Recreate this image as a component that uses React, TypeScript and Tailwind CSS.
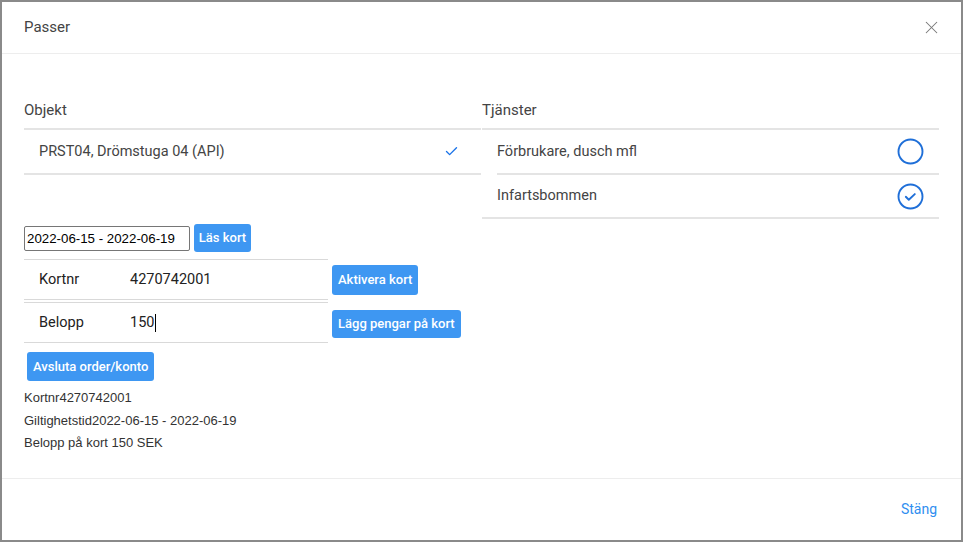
import { Check, X } from 'lucide-react';

const ui = "font-['Roboto','Noto_Sans',sans-serif]";
const arial = "font-['Liberation_Sans','Arial',sans-serif]";

function RingIcon({ checked }: { checked?: boolean }) {
  return (
    <svg width="27" height="27" viewBox="0 0 27 27" fill="none" aria-hidden>
      <circle cx="13.5" cy="13.5" r="12" stroke="#1f6fd8" strokeWidth="1.9" />
      {checked && (
        <path d="M8.8 13.8l3 2.9 6-5.6" stroke="#1f6fd8" strokeWidth="1.9" strokeLinecap="round" strokeLinejoin="round" />
      )}
    </svg>
  );
}

export default function App() {
  return (
    <div className={`${ui} h-[542px] w-[963px] overflow-hidden bg-white`}>
      <div className="flex h-full flex-col border-2 border-[#8a8a8a] bg-white">
        {/* header */}
        <div className="flex h-[52px] shrink-0 items-center justify-between border-b border-[#ededed] pl-[22px] pr-[19px]">
          <h1 className="text-[15px] text-[#444]">Passer</h1>
          <X className="h-[21px] w-[21px] text-[#777]" strokeWidth={1.2} />
        </div>

        {/* body */}
        <div className="flex-1 px-[22px] pt-[46px]">
          <div className="grid grid-cols-2 items-start gap-[1px]">
            <div>
              <h2 className="border-b-2 border-[#e4e4e4] pb-[8px] text-[15px] leading-[20px] text-[#444]">Objekt</h2>
              <div className="flex h-[45px] items-center justify-between border-b-2 border-[#e4e4e4] pl-[15px] pr-[22px] text-[14.5px] text-[#444]">
                <span>PRST04, Drömstuga 04 (API)</span>
                <Check className="h-[15px] w-[15px] text-[#1a73e8]" strokeWidth={2.2} />
              </div>

              <div className="mt-[49px] flex items-center gap-[4px]">
                <input
                  readOnly
                  value="2022-06-15 - 2022-06-19"
                  className={`${arial} h-[25px] w-[166px] rounded-[2px] border border-[#767676] px-[2px] text-[13.3px] text-black outline-none`}
                />
                <button className="h-[28px] w-[57px] rounded-[3px] bg-[#3e97f2] text-[13px] font-medium text-white">Läs kort</button>
              </div>

              <div className="mt-[7px] flex flex-col gap-[2px]">
                <div className="flex items-center gap-[4px]">
                  <div className="flex h-[41px] w-[304px] items-center border-y border-[#d9d9d9] px-[15px] text-[14.5px] text-[#222]">
                    <span className="w-[91px]">Kortnr</span>
                    <span>4270742001</span>
                  </div>
                  <button className="h-[30px] rounded-[3px] bg-[#3e97f2] px-[6px] text-[13px] font-medium text-white">Aktivera kort</button>
                </div>
                <div className="flex items-center gap-[4px]">
                  <div className="flex h-[41px] w-[304px] items-center border-y border-[#d9d9d9] px-[15px] text-[14.5px] text-[#222]">
                    <span className="w-[91px]">Belopp</span>
                    <span>150</span>
                    <span className="ml-[1px] h-[18px] w-px bg-black" />
                  </div>
                  <button className="mt-[3px] h-[28px] rounded-[3px] bg-[#3e97f2] px-[6px] text-[13px] font-medium text-white">Lägg pengar på kort</button>
                </div>
              </div>

              <button className="ml-[3px] mt-[9px] h-[29px] rounded-[3px] bg-[#3e97f2] px-[6px] text-[13px] font-medium text-white">Avsluta order/konto</button>

              <div className={`${arial} mt-[6px] text-[13px] leading-[22.5px] text-[#333]`}>
                <p>Kortnr4270742001</p>
                <p>Giltighetstid2022-06-15 - 2022-06-19</p>
                <p>Belopp på kort 150 SEK</p>
              </div>
            </div>

            <div>
              <h2 className="border-b-2 border-[#e4e4e4] pb-[8px] text-[15px] leading-[20px] text-[#444]">Tjänster</h2>
              <div className="pl-[15px]">
                <div className="flex h-[45px] items-center justify-between border-b-2 border-[#e4e4e4] pr-[15px] text-[14.5px] text-[#444]">
                  <span>Förbrukare, dusch mfl</span>
                  <RingIcon />
                </div>
              </div>
              <div className="flex h-[44px] items-center justify-between border-b-2 border-[#e4e4e4] pl-[15px] pr-[15px] text-[14.5px] text-[#444]">
                <span>Infartsbommen</span>
                <RingIcon checked />
              </div>
            </div>
          </div>
        </div>

        {/* footer */}
        <div className="flex h-[62px] shrink-0 items-center justify-end border-t border-[#ededed] pr-[24px]">
          <button className="text-[14px] text-[#2f8ef0]">Stäng</button>
        </div>
      </div>
    </div>
  );
}
